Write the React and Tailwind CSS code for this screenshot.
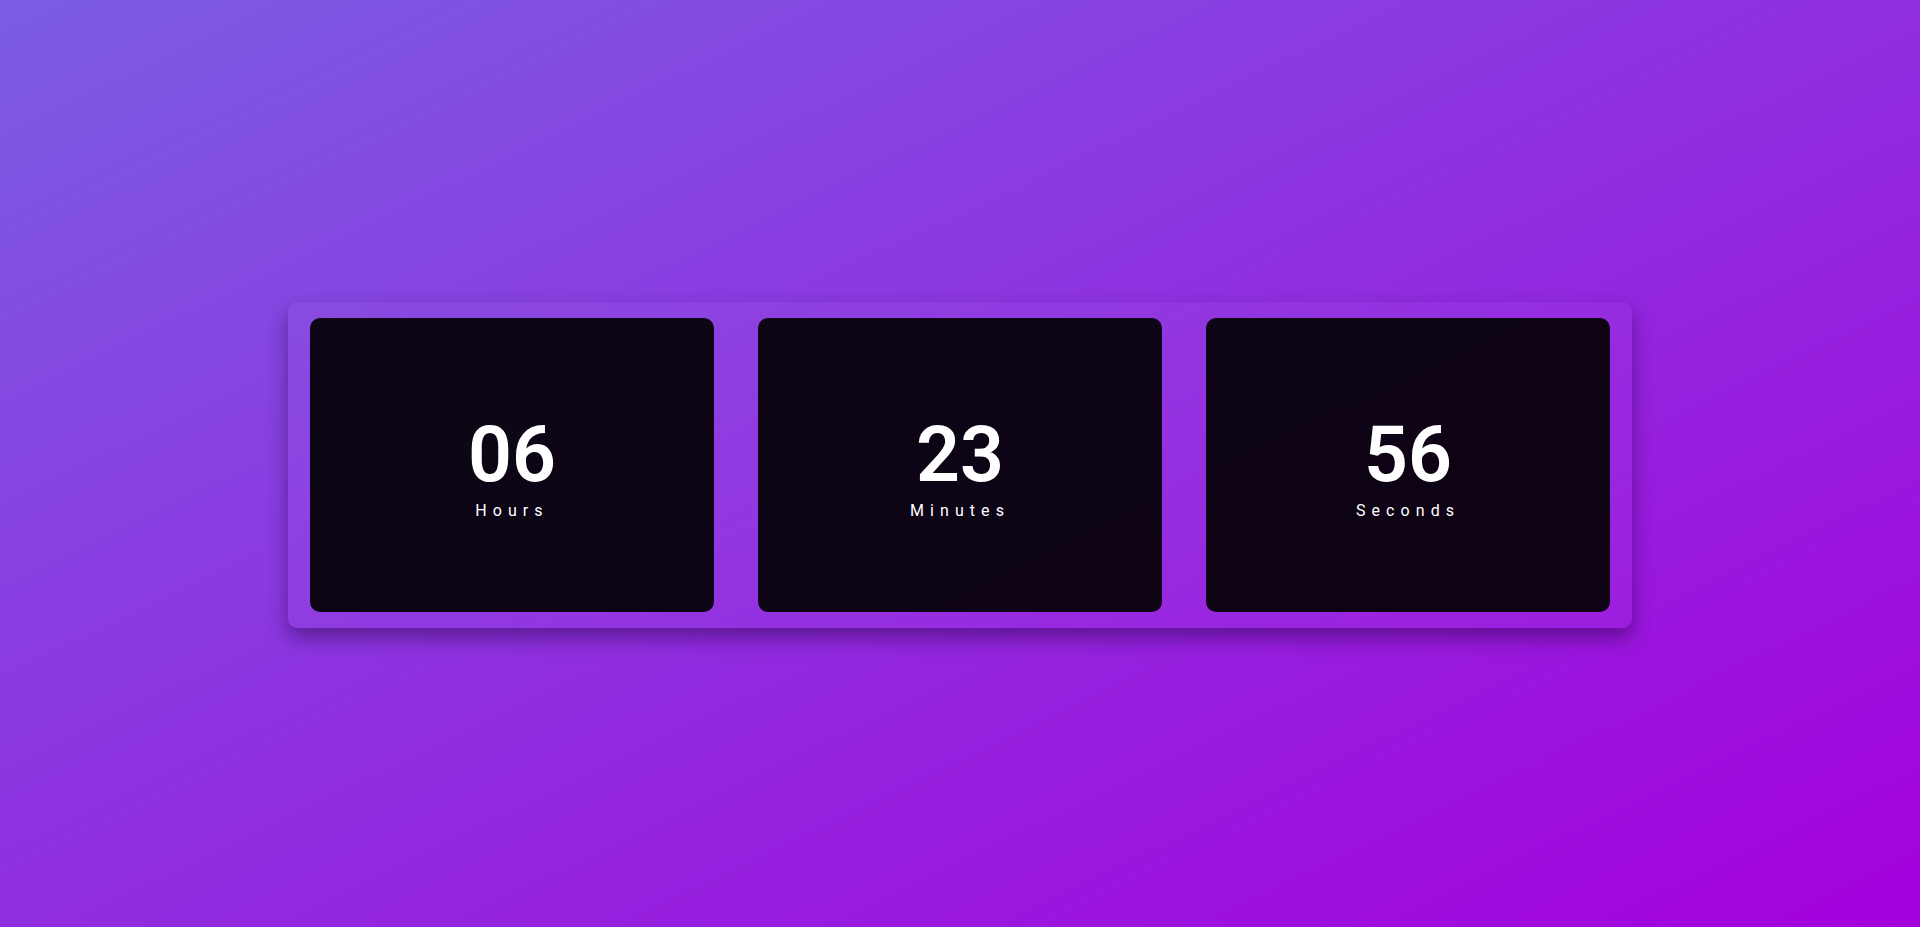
import React from "react";

const items = [
  { value: "06", label: "Hours" },
  { value: "23", label: "Minutes" },
  { value: "56", label: "Seconds" },
];

export default function App() {
  return (
    <div
      className="w-full h-[927px] flex items-center justify-center bg-[linear-gradient(to_bottom_right,#7b5de3,#a400dc)]"
      style={{ fontFamily: "Roboto, 'Liberation Sans', sans-serif" }}
    >
      <div className="mt-[3px] flex gap-[44px] px-[22px] py-4 rounded-[9px] bg-white/[0.03] shadow-[0_10px_20px_rgba(30,0,60,0.45)]">
        {items.map((it) => (
          <div
            key={it.label}
            className="w-[404px] h-[294px] rounded-[10px] bg-black/[0.91] flex flex-col items-center justify-center pt-[10px]"
          >
            <div className="text-white text-[77px] leading-none font-semibold">{it.value}</div>
            <div className="mt-[5px] text-white text-base leading-6 tracking-[0.38em]">
              {it.label}
            </div>
          </div>
        ))}
      </div>
    </div>
  );
}
